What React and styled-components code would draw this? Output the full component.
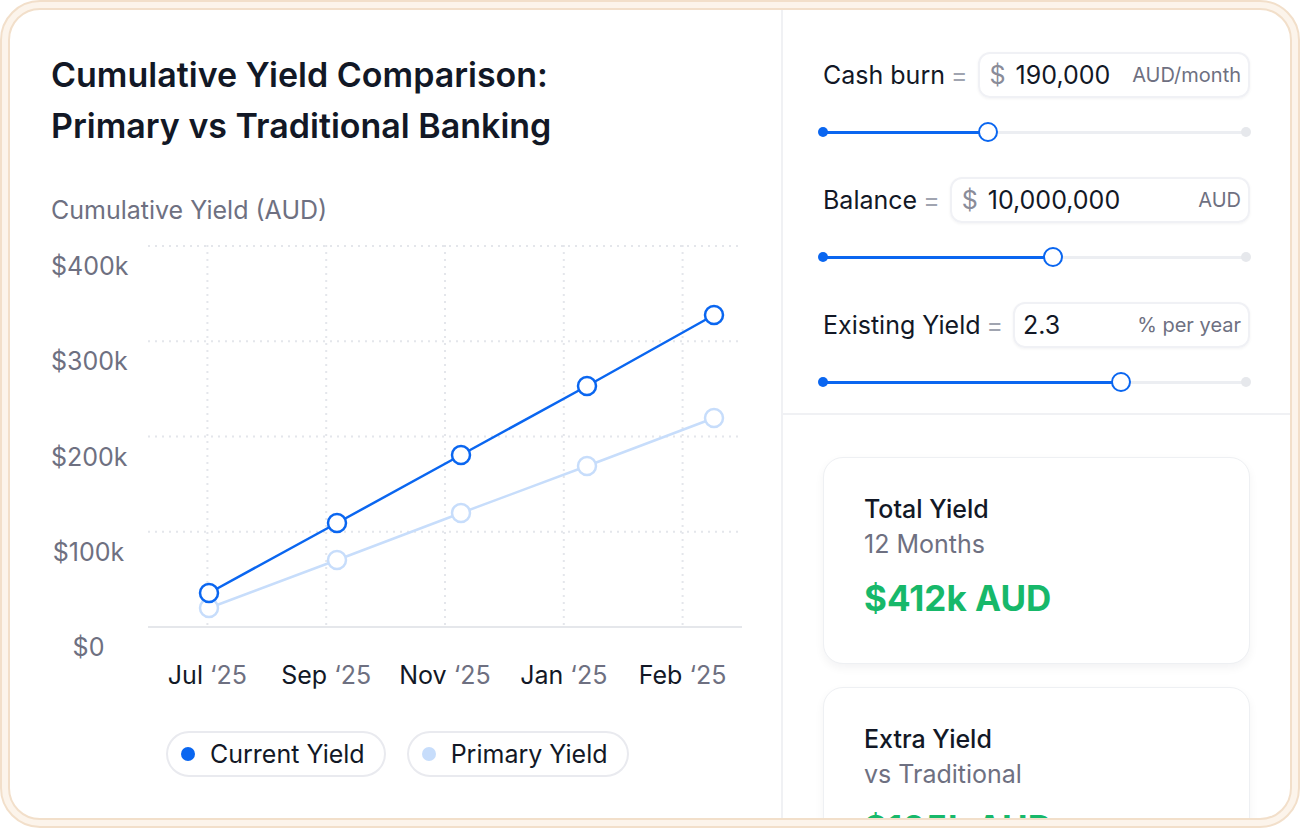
import React from 'react';
import styled, { createGlobalStyle } from 'styled-components';

const GlobalStyle = createGlobalStyle`
  * { box-sizing: border-box; }
  html, body { margin: 0; padding: 0; background: #ffffff; }
  body {
    font-family: Inter, "Noto Sans", sans-serif;
    color: #111827;
    -webkit-font-smoothing: antialiased;
  }
`;

const BLUE = '#0a66f0';
const LIGHT_BLUE = '#c7ddfb';
const GRAY_TEXT = '#6e7081';
const DARK = '#121826';

const Frame = styled.div`
  width: 1300px;
  height: 828px;
  padding: 6px;
  border: 2px solid #f2dfca;
  border-radius: 40px;
  background: #fcf4eb;
`;

const Surface = styled.div`
  height: 100%;
  border: 2px solid #f2dfca;
  border-radius: 32px;
  background: #ffffff;
  overflow: hidden;
  display: grid;
  grid-template-columns: 771px 1fr;
`;

const ChartPanel = styled.section`
  padding: 39px 41px 0;
`;

const Title = styled.h1`
  margin: 0;
  font-size: 34px;
  line-height: 51px;
  font-weight: 600;
  color: ${DARK};
`;

const AxisCaption = styled.div`
  margin-top: 44px;
  font-size: 25px;
  line-height: 30px;
  color: ${GRAY_TEXT};
`;

const ChartBody = styled.div`
  display: flex;
  gap: 22px;
  margin-top: 20px;
`;

const YAxis = styled.div`
  width: 75px;
  padding-top: 8px;
  display: flex;
  flex-direction: column;
  gap: 69.25px;
`;

const YLabel = styled.span`
  display: block;
  height: 26px;
  line-height: 26px;
  font-size: 25px;
  text-align: center;
  color: ${GRAY_TEXT};
`;

const PlotColumn = styled.div`
  width: 594px;
`;

const Plot = styled.svg`
  display: block;
  overflow: visible;
`;

const XAxis = styled.div`
  display: grid;
  grid-template-columns: repeat(5, 1fr);
  margin-top: 34px;
`;

const XLabel = styled.span`
  text-align: center;
  font-size: 25px;
  line-height: 26px;
  color: ${DARK};

  em {
    font-style: normal;
    color: ${GRAY_TEXT};
  }
`;

const Legend = styled.div`
  display: flex;
  gap: 21px;
  margin-top: 43px;
  margin-left: 115px;
`;

const LegendPill = styled.div`
  display: flex;
  align-items: center;
  gap: 15px;
  height: 46px;
  padding: 0 19px 0 13px;
  border: 2px solid #e9eaef;
  border-radius: 999px;
  font-size: 25px;
  color: ${DARK};
`;

const Dot = styled.span`
  width: 14px;
  height: 14px;
  border-radius: 50%;
  background: ${(p) => p.color};
`;

const SidePanel = styled.aside`
  border-left: 2px solid #f0f1f4;
  display: flex;
  flex-direction: column;
`;

const Controls = styled.div`
  padding: 42px 40px 21px;
  border-bottom: 2px solid #f0f1f4;
  display: flex;
  flex-direction: column;
  gap: 35px;
`;

const ControlGroup = styled.div``;

const FieldRow = styled.div`
  display: flex;
  align-items: center;
`;

const FieldLabel = styled.span`
  font-size: 25px;
  color: ${DARK};
  white-space: nowrap;
`;

const Equals = styled.span`
  margin: 0 10px 0 6px;
  font-size: 25px;
  color: #a0a4b0;
`;

const InputBox = styled.div`
  flex: 1;
  height: 46px;
  display: flex;
  align-items: center;
  padding: 0 7px 0 ${(p) => (p.$tight ? 8 : 10)}px;
  border: 2px solid #f0f1f5;
  border-radius: 12px;
  box-shadow: 0 1px 3px rgba(17, 24, 39, 0.05);
`;

const Currency = styled.span`
  font-size: 25px;
  color: #8a8c99;
  margin-right: 10px;
`;

const Value = styled.span`
  font-size: 25px;
  color: ${DARK};
  flex: 1;
  white-space: nowrap;
`;

const Unit = styled.span`
  font-size: 20px;
  color: ${GRAY_TEXT};
  white-space: nowrap;
`;

const SliderTrack = styled.div`
  position: relative;
  height: 20px;
  margin: 24px 4px 0 0;
  &::before {
    content: '';
    position: absolute;
    left: 0;
    right: 0;
    top: 8.5px;
    height: 3px;
    background: #eceef2;
    border-radius: 2px;
  }
  &::after {
    content: '';
    position: absolute;
    right: -5px;
    top: 5px;
    width: 10px;
    height: 10px;
    border-radius: 50%;
    background: #e6e8ec;
  }
`;

const SliderFill = styled.div`
  position: absolute;
  left: 0;
  top: 8.5px;
  height: 3px;
  background: ${BLUE};
  z-index: 1;
  &::before {
    content: '';
    position: absolute;
    left: -5px;
    top: -3.5px;
    width: 10px;
    height: 10px;
    border-radius: 50%;
    background: ${BLUE};
  }
`;

const Thumb = styled.div`
  position: absolute;
  top: 0;
  width: 20px;
  height: 20px;
  margin-left: -10px;
  border-radius: 50%;
  background: #ffffff;
  border: 2.5px solid ${BLUE};
  z-index: 2;
`;

const Results = styled.div`
  padding: 42px 40px 0;
  display: flex;
  flex-direction: column;
  gap: 23px;
`;

const ResultCard = styled.div`
  height: 207px;
  flex-shrink: 0;
  padding: 35px 40px 0;
  border: 1px solid #eef0f3;
  border-radius: 20px;
  box-shadow: 0 4px 10px rgba(17, 24, 39, 0.05);
  background: #ffffff;
`;

const CardTitle = styled.div`
  font-size: 25px;
  line-height: 32px;
  font-weight: 500;
  color: ${DARK};
`;

const CardSub = styled.div`
  margin-top: 3px;
  font-size: 25px;
  line-height: 32px;
  color: ${GRAY_TEXT};
`;

const CardAmount = styled.div`
  margin-top: 16px;
  font-size: 35px;
  line-height: 44px;
  font-weight: 700;
  color: #17b86a;
`;

const yTicks = ['$400k', '$300k', '$200k', '$100k', '$0'];
const months = [
  ['Jul', '25'],
  ['Sep', '25'],
  ['Nov', '25'],
  ['Jan', '25'],
  ['Feb', '25'],
];

const currentPts = [[61, 348], [189, 278], [313, 210], [439, 141], [566, 70]];
const primaryPts = [[61, 363], [189, 315], [313, 268], [439, 221], [566, 173]];

const Series = ({ points, color }) => (
  <g>
    <polyline
      points={points.map((p) => p.join(',')).join(' ')}
      fill="none"
      stroke={color}
      strokeWidth="2.5"
    />
    {points.map(([x, y]) => (
      <circle key={x} cx={x} cy={y} r="9" fill="#fff" stroke={color} strokeWidth="2.5" />
    ))}
  </g>
);

const Chart = () => {
  const w = 594;
  const h = 383;
  const cols = [59.4, 178.2, 297, 415.8, 534.6];
  const rows = [1, 96.25, 191.5, 286.75];
  return (
    <Plot width={w} height={h} viewBox={`0 0 ${w} ${h}`}>
      {rows.map((y) => (
        <line key={y} x1="0" x2={w} y1={y} y2={y} stroke="#e4e6eb" strokeWidth="2" strokeDasharray="2 5" />
      ))}
      {cols.map((x) => (
        <line key={x} x1={x} x2={x} y1="0" y2="380" stroke="#e4e6eb" strokeWidth="2" strokeDasharray="2 5" />
      ))}
      <line x1="0" x2={w} y1="382" y2="382" stroke="#e5e7eb" strokeWidth="2" />
      <Series points={primaryPts} color={LIGHT_BLUE} />
      <Series points={currentPts} color={BLUE} />
    </Plot>
  );
};

const Slider = ({ value }) => (
  <SliderTrack>
    <SliderFill style={{ width: `${value}%` }} />
    <Thumb style={{ left: `${value}%` }} />
  </SliderTrack>
);

const controls = [
  { label: 'Cash burn', currency: '$', value: '190,000', unit: 'AUD/month', pct: 39 },
  { label: 'Balance', currency: '$', value: '10,000,000', unit: 'AUD', pct: 54.4 },
  { label: 'Existing Yield', currency: null, value: '2.3', unit: '% per year', pct: 70.4 },
];

const results = [
  { title: 'Total Yield', sub: '12 Months', amount: '$412k AUD' },
  { title: 'Extra Yield', sub: 'vs Traditional', amount: '$105k AUD' },
];

export default function App() {
  return (
    <>
      <GlobalStyle />
      <Frame>
        <Surface>
          <ChartPanel>
            <Title>
              Cumulative Yield Comparison:
              <br />
              Primary vs Traditional Banking
            </Title>
            <AxisCaption>Cumulative Yield (AUD)</AxisCaption>
            <ChartBody>
              <YAxis>
                {yTicks.map((t) => (
                  <YLabel key={t}>{t}</YLabel>
                ))}
              </YAxis>
              <PlotColumn>
                <Chart />
                <XAxis>
                  {months.map(([m, y]) => (
                    <XLabel key={m}>
                      {m} <em>‘{y}</em>
                    </XLabel>
                  ))}
                </XAxis>
              </PlotColumn>
            </ChartBody>
            <Legend>
              <LegendPill>
                <Dot color={BLUE} />
                Current Yield
              </LegendPill>
              <LegendPill>
                <Dot color={LIGHT_BLUE} />
                Primary Yield
              </LegendPill>
            </Legend>
          </ChartPanel>

          <SidePanel>
            <Controls>
              {controls.map((c) => (
                <ControlGroup key={c.label}>
                  <FieldRow>
                    <FieldLabel>{c.label}</FieldLabel>
                    <Equals>=</Equals>
                    <InputBox $tight={!c.currency}>
                      {c.currency && <Currency>{c.currency}</Currency>}
                      <Value>{c.value}</Value>
                      <Unit>{c.unit}</Unit>
                    </InputBox>
                  </FieldRow>
                  <Slider value={c.pct} />
                </ControlGroup>
              ))}
            </Controls>
            <Results>
              {results.map((r) => (
                <ResultCard key={r.title}>
                  <CardTitle>{r.title}</CardTitle>
                  <CardSub>{r.sub}</CardSub>
                  <CardAmount>{r.amount}</CardAmount>
                </ResultCard>
              ))}
            </Results>
          </SidePanel>
        </Surface>
      </Frame>
    </>
  );
}
